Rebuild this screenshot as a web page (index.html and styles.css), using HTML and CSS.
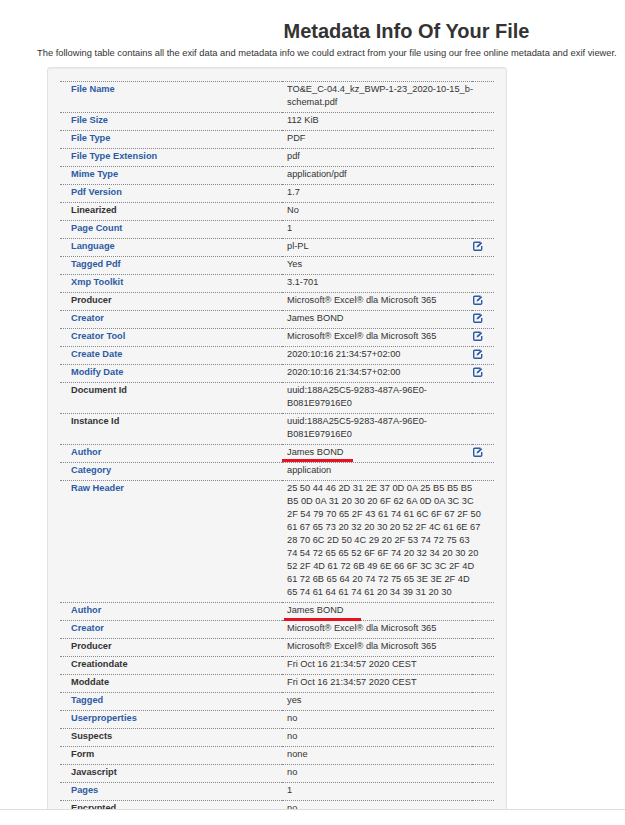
FILE: index.html
```
<!DOCTYPE html>
<html lang="en">
<head>
<meta charset="utf-8">
<title>Metadata Info Of Your File</title>
<link rel="stylesheet" href="styles.css">
</head>
<body>
<header class="intro">
  <h1>Metadata Info Of Your File</h1>
  <p>The following table contains all the exif data and metadata info we could extract from your file using our free online metadata and exif viewer.</p>
</header>
<main class="card">
  <table class="meta">
    <colgroup><col class="c-label"><col class="c-value"><col class="c-edit"></colgroup>
    <tbody>
      <tr><th><a href="#">File Name</a></th><td colspan="2">TO&amp;E_C-04.4_kz_BWP-1-23_2020-10-15_b-schemat.pdf</td></tr>
      <tr><th><a href="#">File Size</a></th><td>112 KiB</td><td></td></tr>
      <tr><th><a href="#">File Type</a></th><td>PDF</td><td></td></tr>
      <tr><th><a href="#">File Type Extension</a></th><td>pdf</td><td></td></tr>
      <tr><th><a href="#">Mime Type</a></th><td>application/pdf</td><td></td></tr>
      <tr><th><a href="#">Pdf Version</a></th><td>1.7</td><td></td></tr>
      <tr><th>Linearized</th><td>No</td><td></td></tr>
      <tr><th><a href="#">Page Count</a></th><td>1</td><td></td></tr>
      <tr><th><a href="#">Language</a></th><td>pl-PL</td><td class="edit"><svg class="ico" viewBox="0 0 10 10"><path d="M7.5 1.2H1.7a1 1 0 0 0-1 1v6a1 1 0 0 0 1 1h6a1 1 0 0 0 1-1V5"/><path class="pen" d="M3.6 6.4l.4-1.7L8 .9l1.2 1.3-3.9 3.8z"/></svg></td></tr>
      <tr><th><a href="#">Tagged Pdf</a></th><td>Yes</td><td></td></tr>
      <tr><th><a href="#">Xmp Toolkit</a></th><td>3.1-701</td><td></td></tr>
      <tr><th>Producer</th><td>Microsoft® Excel® dla Microsoft 365</td><td class="edit"><svg class="ico" viewBox="0 0 10 10"><path d="M7.5 1.2H1.7a1 1 0 0 0-1 1v6a1 1 0 0 0 1 1h6a1 1 0 0 0 1-1V5"/><path class="pen" d="M3.6 6.4l.4-1.7L8 .9l1.2 1.3-3.9 3.8z"/></svg></td></tr>
      <tr><th><a href="#">Creator</a></th><td>James BOND</td><td class="edit"><svg class="ico" viewBox="0 0 10 10"><path d="M7.5 1.2H1.7a1 1 0 0 0-1 1v6a1 1 0 0 0 1 1h6a1 1 0 0 0 1-1V5"/><path class="pen" d="M3.6 6.4l.4-1.7L8 .9l1.2 1.3-3.9 3.8z"/></svg></td></tr>
      <tr><th><a href="#">Creator Tool</a></th><td>Microsoft® Excel® dla Microsoft 365</td><td class="edit"><svg class="ico" viewBox="0 0 10 10"><path d="M7.5 1.2H1.7a1 1 0 0 0-1 1v6a1 1 0 0 0 1 1h6a1 1 0 0 0 1-1V5"/><path class="pen" d="M3.6 6.4l.4-1.7L8 .9l1.2 1.3-3.9 3.8z"/></svg></td></tr>
      <tr><th><a href="#">Create Date</a></th><td>2020:10:16 21:34:57+02:00</td><td class="edit"><svg class="ico" viewBox="0 0 10 10"><path d="M7.5 1.2H1.7a1 1 0 0 0-1 1v6a1 1 0 0 0 1 1h6a1 1 0 0 0 1-1V5"/><path class="pen" d="M3.6 6.4l.4-1.7L8 .9l1.2 1.3-3.9 3.8z"/></svg></td></tr>
      <tr><th><a href="#">Modify Date</a></th><td>2020:10:16 21:34:57+02:00</td><td class="edit"><svg class="ico" viewBox="0 0 10 10"><path d="M7.5 1.2H1.7a1 1 0 0 0-1 1v6a1 1 0 0 0 1 1h6a1 1 0 0 0 1-1V5"/><path class="pen" d="M3.6 6.4l.4-1.7L8 .9l1.2 1.3-3.9 3.8z"/></svg></td></tr>
      <tr><th>Document Id</th><td>uuid:188A25C5-9283-487A-96E0-B081E97916E0</td><td></td></tr>
      <tr><th>Instance Id</th><td>uuid:188A25C5-9283-487A-96E0-B081E97916E0</td><td></td></tr>
      <tr><th><a href="#">Author</a></th><td class="mark">James BOND<span class="underline first"></span></td><td class="edit"><svg class="ico" viewBox="0 0 10 10"><path d="M7.5 1.2H1.7a1 1 0 0 0-1 1v6a1 1 0 0 0 1 1h6a1 1 0 0 0 1-1V5"/><path class="pen" d="M3.6 6.4l.4-1.7L8 .9l1.2 1.3-3.9 3.8z"/></svg></td></tr>
      <tr><th><a href="#">Category</a></th><td>application</td><td></td></tr>
      <tr><th><a href="#">Raw Header</a></th><td colspan="2" class="raw">25 50 44 46 2D 31 2E 37 0D 0A 25 B5 B5 B5<br>B5 0D 0A 31 20 30 20 6F 62 6A 0D 0A 3C 3C<br>2F 54 79 70 65 2F 43 61 74 61 6C 6F 67 2F 50<br>61 67 65 73 20 32 20 30 20 52 2F 4C 61 6E 67<br>28 70 6C 2D 50 4C 29 20 2F 53 74 72 75 63<br>74 54 72 65 65 52 6F 6F 74 20 32 34 20 30 20<br>52 2F 4D 61 72 6B 49 6E 66 6F 3C 3C 2F 4D<br>61 72 6B 65 64 20 74 72 75 65 3E 3E 2F 4D<br>65 74 61 64 61 74 61 20 34 39 31 20 30</td></tr>
      <tr><th><a href="#">Author</a></th><td class="mark">James BOND<span class="underline second"></span></td><td></td></tr>
      <tr><th><a href="#">Creator</a></th><td>Microsoft® Excel® dla Microsoft 365</td><td></td></tr>
      <tr><th>Producer</th><td>Microsoft® Excel® dla Microsoft 365</td><td></td></tr>
      <tr><th>Creationdate</th><td>Fri Oct 16 21:34:57 2020 CEST</td><td></td></tr>
      <tr><th>Moddate</th><td>Fri Oct 16 21:34:57 2020 CEST</td><td></td></tr>
      <tr><th><a href="#">Tagged</a></th><td>yes</td><td></td></tr>
      <tr><th><a href="#">Userproperties</a></th><td>no</td><td></td></tr>
      <tr><th>Suspects</th><td>no</td><td></td></tr>
      <tr><th>Form</th><td>none</td><td></td></tr>
      <tr><th>Javascript</th><td>no</td><td></td></tr>
      <tr><th><a href="#">Pages</a></th><td>1</td><td></td></tr>
      <tr><th>Encrypted</th><td>no</td><td></td></tr>
    </tbody>
  </table>
</main>
<div class="footer-strip"></div>
</body>
</html>
```
FILE: styles.css
```
html, body {
  margin: 0;
  height: 825px;
  overflow: hidden;
  background: #fff;
}
body {
  font-family: "Liberation Sans", Arial, sans-serif;
  font-size: 9.25px;
  line-height: 13px;
  color: #333;
}
.intro {
  padding-top: 19px;
}
.intro h1 {
  margin: 0 0 0 188px;
  width: 437px;
  text-align: center;
  font-size: 20px;
  line-height: 24px;
  font-weight: 700;
  color: #333;
}
.intro p {
  margin: 0;
  padding: 4px 0 0 37px;
  font-size: 9.33px;
  white-space: nowrap;
  color: #333;
}
.card {
  margin: 7px 0 0 47px;
  width: 434px;
  padding: 13px 12px 20px;
  background: #f5f5f5;
  border: 1px solid #e3e3e3;
  border-radius: 3px;
  box-shadow: inset 0 1px 1px rgba(0,0,0,.05);
}
.meta {
  width: 434px;
  table-layout: fixed;
  border-collapse: collapse;
}
.c-label { width: 222px; }
.c-value { width: 190px; }
.c-edit { width: 22px; }
.meta th, .meta td {
  border-top: 1px dotted #888;
  padding: 1px 10px 3px 5px;
  vertical-align: top;
  text-align: left;
}
.meta .raw {
  white-space: nowrap;
}
.meta th {
  padding-left: 11px;
  font-weight: 700;
  color: #333;
}
.meta a {
  color: #2c5ba3;
  text-decoration: none;
}
.mark {
  position: relative;
}
.underline {
  position: absolute;
  height: 3px;
  background: #e8111f;
}
.underline.first {
  left: 0;
  top: 14px;
  width: 71px;
}
.underline.second {
  left: 2px;
  top: 15px;
  width: 77px;
}
.meta .edit {
  padding: 1px 0 0 1px;
  line-height: 0;
}
.ico {
  width: 10px;
  height: 10px;
  margin-top: 1px;
  fill: none;
  stroke: #2c5ba3;
  stroke-width: 1.4;
}
.ico .pen {
  fill: #2c5ba3;
  stroke: none;
}
.footer-strip {
  position: fixed;
  left: 0;
  right: 0;
  top: 809px;
  bottom: 0;
  background: #fff;
  border-top: 1px solid #ddd;
}
```
